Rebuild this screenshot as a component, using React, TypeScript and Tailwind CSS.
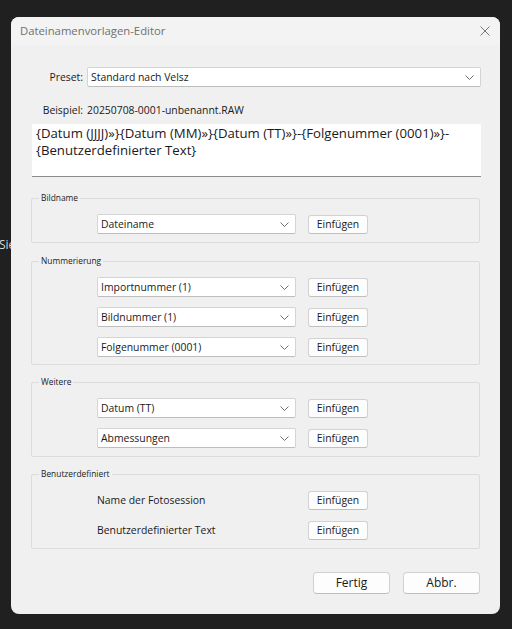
import React from "react";

const Chevron = () => (
  <svg width="9" height="5" viewBox="0 0 9 5" className="shrink-0">
    <path d="M0.5 0.5 L4.5 4.5 L8.5 0.5" fill="none" stroke="#6f6f6f" strokeWidth="1" />
  </svg>
);

const Select = ({ value, className = "" }: { value: string; className?: string }) => (
  <div
    className={`h-[20px] flex items-center justify-between bg-white border border-[#d4d4d4] border-b-[#bdbdbd] rounded-[2px] pl-[3px] pr-[6px] text-[10.4px] text-[#1a1a1a] ${className}`}
  >
    <span className="leading-none">{value}</span>
    <Chevron />
  </div>
);

const InsertButton = () => (
  <div className="h-[19px] w-[60px] flex items-center justify-center bg-[#fdfdfd] border border-[#d2d2d2] border-b-[#c0c0c0] rounded-[3px] text-[10.4px] text-[#1a1a1a] leading-none">
    Einfügen
  </div>
);

const Group = ({
  title,
  height,
  children,
}: {
  title: string;
  height: string;
  children: React.ReactNode;
}) => (
  <div className={`relative mx-[20px] border border-[#dcdcdc] rounded-[2px] ${height} pt-[15px] pl-[65px] flex flex-col gap-[10px]`}>
    <span className="absolute left-[7px] top-[-7px] bg-[#f0f0f0] px-[2px] text-[8.4px] leading-[12px] text-[#222]">
      {title}
    </span>
    {children}
  </div>
);

const Row = ({ value }: { value: string }) => (
  <div className="flex items-center gap-[12px] h-[20px]">
    <Select value={value} className="w-[199px]" />
    <InsertButton />
  </div>
);

const LabelRow = ({ label }: { label: string }) => (
  <div className="flex items-center h-[20px]">
    <span className="w-[211px] text-[10.4px] text-[#1a1a1a] leading-none">{label}</span>
    <InsertButton />
  </div>
);

export default function App() {
  return (
    <div className="relative w-[512px] h-[629px] overflow-hidden bg-[#202020] pt-[17px] pl-[11px] font-['Open_Sans',sans-serif]">
      <span className="absolute left-[-1px] top-[239px] text-[12px] text-[#d8d8d8] leading-none">Sie</span>
      <div className="relative z-10 w-[489px] h-[597px] rounded-[8px] bg-[#f0f0f0] overflow-hidden flex flex-col">
        {/* title bar */}
        <div className="h-[28px] shrink-0 bg-[#f3f3f3] flex items-center justify-between pl-[9px] pr-[10px]">
          <span className="text-[11.3px] text-[#707070] leading-none">Dateinamenvorlagen-Editor</span>
          <svg width="10" height="10" viewBox="0 0 10 10">
            <path d="M0.5 0.5 L9.5 9.5 M9.5 0.5 L0.5 9.5" stroke="#777" strokeWidth="1" fill="none" />
          </svg>
        </div>

        {/* preset */}
        <div className="mt-[22px] flex items-center h-[20px]">
          <span className="w-[72px] text-right text-[10.4px] text-[#1a1a1a] leading-none">Preset:</span>
          <Select value="Standard nach Velsz" className="ml-[4px] w-[394px]" />
        </div>

        {/* example */}
        <div className="mt-[15px] flex items-center h-[16px]">
          <span className="w-[72px] text-right text-[10.4px] text-[#1a1a1a] leading-none">Beispiel:</span>
          <span className="ml-[4px] text-[10.4px] text-[#1a1a1a] leading-none">20250708-0001-unbenannt.RAW</span>
        </div>

        {/* template text */}
        <div className="mt-[6px] mx-[21px] w-[449px] h-[53px] bg-white border-b border-[#8c8c8c] pl-[4px] pt-[1px] text-[13.2px] leading-[17px] text-[#1a1a1a]">
          <div>{"{Datum (JJJJ)»}{Datum (MM)»}{Datum (TT)»}-{Folgenummer (0001)»}-"}</div>
          <div>{"{Benutzerdefinierter Text}"}</div>
        </div>

        <div className="mt-[21px]">
          <Group title="Bildname" height="h-[45px]">
            <Row value="Dateiname" />
          </Group>
        </div>

        <div className="mt-[18px]">
          <Group title="Nummerierung" height="h-[104px]">
            <Row value="Importnummer (1)" />
            <Row value="Bildnummer (1)" />
            <Row value="Folgenummer (0001)" />
          </Group>
        </div>

        <div className="mt-[17px]">
          <Group title="Weitere" height="h-[75px]">
            <Row value="Datum (TT)" />
            <Row value="Abmessungen" />
          </Group>
        </div>

        <div className="mt-[17px]">
          <Group title="Benutzerdefiniert" height="h-[75px]">
            <LabelRow label="Name der Fotosession" />
            <LabelRow label="Benutzerdefinierter Text" />
          </Group>
        </div>

        {/* footer */}
        <div className="mt-[23px] flex justify-end gap-[13px] pr-[20px]">
          <div className="w-[77px] h-[22px] flex items-center justify-center bg-[#fdfdfd] border border-[#d0d0d0] border-b-[#bdbdbd] rounded-[4px] text-[12px] text-[#1a1a1a] leading-none">
            Fertig
          </div>
          <div className="w-[77px] h-[22px] flex items-center justify-center bg-[#fdfdfd] border border-[#d0d0d0] border-b-[#bdbdbd] rounded-[4px] text-[12px] text-[#1a1a1a] leading-none">
            Abbr.
          </div>
        </div>
      </div>
    </div>
  );
}
